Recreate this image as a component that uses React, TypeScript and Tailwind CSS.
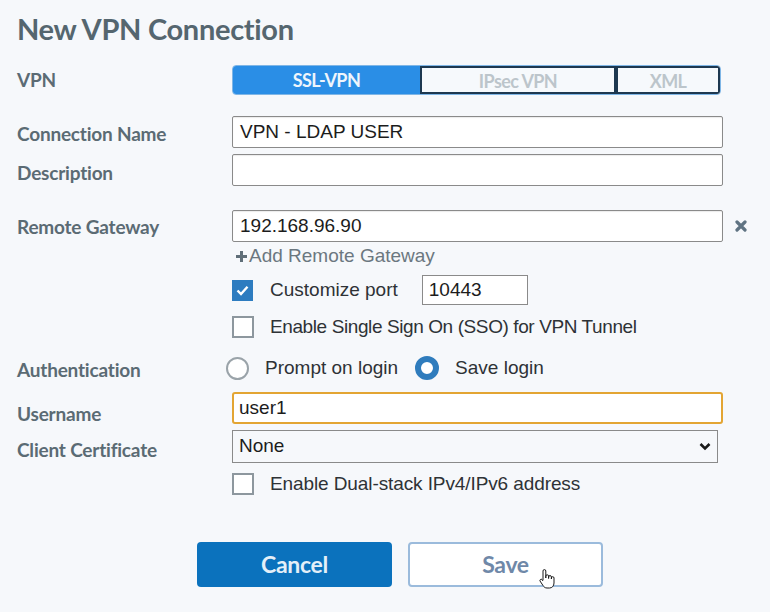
import { useState } from "react";

const label = "text-[19px] font-bold tracking-[-0.2px] text-[#5b6b74] [font-family:Lato,'Noto_Sans',sans-serif]";
const field = "text-[19px] text-[#1c1c1c] [font-family:'Liberation_Sans',Arial,sans-serif]";

function Checkbox({ checked }: { checked?: boolean }) {
  return checked ? (
    <span className="flex h-[21px] w-[21px] items-center justify-center bg-[#2d7cc0]">
      <svg width="13" height="11" viewBox="0 0 13 11">
        <path d="M1.5 5.5 L5 9 L11.5 1.8" fill="none" stroke="#fff" strokeWidth="2.4" />
      </svg>
    </span>
  ) : (
    <span className="block h-[22px] w-[22px] border-2 border-[#8d979e] bg-white" />
  );
}

function Radio({ checked }: { checked?: boolean }) {
  return checked ? (
    <span className="block h-[24px] w-[24px] rounded-full border-[6px] border-[#2f7cbd] bg-white" />
  ) : (
    <span className="block h-[23px] w-[23px] rounded-full border-2 border-[#9aa3a9] bg-white" />
  );
}

export default function App() {
  const [mode, setMode] = useState("SSL-VPN");

  return (
    <div className="h-[612px] w-[770px] overflow-hidden bg-[#f6f8fb] pl-[17px] pt-[12px]">
      <h1 className="text-[29px] font-bold leading-[34px] tracking-[-0.3px] text-[#55666f] [font-family:Lato,sans-serif]">
        New VPN Connection
      </h1>

      {/* VPN type */}
      <div className="mt-[19px] flex h-[30px] items-center">
        <div className={`${label} w-[215px]`}>VPN</div>
        <div className="flex h-[30px] w-[489px] overflow-hidden rounded-[4px] border border-[#7fb6e6] text-[18px] font-bold tracking-[-0.6px] [font-family:Lato,sans-serif]">
          {["SSL-VPN", "IPsec VPN", "XML"].map((m, i) => (
            <button
              key={m}
              onClick={() => setMode(m)}
              className={
                (i === 0 ? "w-[187px] " : i === 1 ? "w-[196px] " : "flex-1 ") +
                (mode === m
                  ? "bg-[#2a8ee6] text-[#eef5fc]"
                  : "border-2 border-[#1d3850] bg-[#f6f9fc] text-[#bcc5cb]")
              }
            >
              {m}
            </button>
          ))}
        </div>
      </div>

      {/* Connection name */}
      <div className="mt-[21px] flex h-[32px] items-center">
        <div className={`${label} w-[215px] pt-[4px]`}>Connection Name</div>
        <div className={`${field} flex h-[32px] w-[491px] items-center rounded-[2px] border border-[#8a8a8a] bg-white pl-[7px] shadow-[inset_0_1px_1px_rgba(0,0,0,0.08)]`}>
          VPN - LDAP USER
        </div>
      </div>

      {/* Description */}
      <div className="mt-[6px] flex h-[32px] items-center">
        <div className={`${label} w-[215px] pt-[7px]`}>Description</div>
        <div className="h-[32px] w-[491px] rounded-[2px] border border-[#8a8a8a] bg-white shadow-[inset_0_1px_1px_rgba(0,0,0,0.08)]" />
      </div>

      {/* Remote gateway */}
      <div className="mt-[24px] flex h-[32px] items-center">
        <div className={`${label} w-[215px] pt-[2px]`}>Remote Gateway</div>
        <div className={`${field} flex h-[32px] w-[491px] items-center rounded-[2px] border border-[#8a8a8a] bg-white pl-[7px] shadow-[inset_0_1px_1px_rgba(0,0,0,0.08)]`}>
          192.168.96.90
        </div>
        <svg className="ml-[12px]" width="12" height="12" viewBox="0 0 12 12">
          <path d="M2 2 L10 10 M10 2 L2 10" stroke="#5f7382" strokeWidth="3.2" strokeLinecap="round" />
        </svg>
      </div>

      <div className="ml-[215px] mt-[3px] flex h-[22px] items-center text-[19px] text-[#6b7780] [font-family:'Liberation_Sans',Arial,sans-serif]">
        <svg width="13" height="13" viewBox="0 0 13 13" className="ml-[3px]">
          <path d="M6.5 1 V12 M1 6.5 H12" stroke="#5f6e78" strokeWidth="3" />
        </svg>
        <span className="ml-[1px]">Add Remote Gateway</span>
      </div>

      {/* Customize port */}
      <div className="ml-[215px] mt-[8px] flex h-[30px] items-center">
        <Checkbox checked />
        <span className={`${field} ml-[17px] text-[18px] text-[#2e3236]`}>Customize port</span>
        <div className={`${field} ml-[24px] flex h-[30px] w-[106px] items-center border border-[#8a8a8a] bg-white pl-[6px]`}>
          10443
        </div>
      </div>

      {/* SSO */}
      <div className="ml-[215px] mt-[8px] flex h-[28px] items-center">
        <Checkbox />
        <span className={`${field} ml-[16px] text-[18px] tracking-[-0.4px] text-[#2e3236]`}>Enable Single Sign On (SSO) for VPN Tunnel</span>
      </div>

      {/* Authentication */}
      <div className="mt-[13px] flex h-[28px] items-center">
        <div className={`${label} w-[209px] pt-[5px]`}>Authentication</div>
        <Radio />
        <span className={`${field} ml-[16px] text-[18px] text-[#2e3236]`}>Prompt on login</span>
        <span className="ml-[17px]">
          <Radio checked />
        </span>
        <span className={`${field} ml-[16px] text-[18px] text-[#2e3236]`}>Save login</span>
      </div>

      {/* Username */}
      <div className="mt-[10px] flex h-[32px] items-center">
        <div className={`${label} w-[215px] pt-[12px]`}>Username</div>
        <div className={`${field} flex h-[32px] w-[491px] items-center rounded-[3px] border-2 border-[#e3a533] bg-white pl-[5px]`}>
          user1
        </div>
      </div>

      {/* Client certificate */}
      <div className="mt-[6px] flex h-[33px] items-center">
        <div className={`${label} w-[215px] pt-[8px]`}>Client Certificate</div>
        <div className={`${field} flex h-[33px] w-[486px] items-center justify-between border border-[#8a8a8a] bg-[#f6f8fb] pl-[6px] pr-[6px]`}>
          <span>None</span>
          <svg width="12" height="9" viewBox="0 0 12 9">
            <path d="M1.5 2 L6 6.5 L10.5 2" fill="none" stroke="#1a1a1a" strokeWidth="2.6" />
          </svg>
        </div>
      </div>

      {/* Dual stack */}
      <div className="ml-[215px] mt-[10px] flex h-[22px] items-center">
        <Checkbox />
        <span className={`${field} ml-[16px] text-[18px] tracking-[-0.1px] text-[#2e3236]`}>Enable Dual-stack IPv4/IPv6 address</span>
      </div>

      {/* Buttons */}
      <div className="ml-[180px] mt-[47px] flex gap-[16px] text-[23px] font-bold tracking-[-0.3px] [font-family:Lato,sans-serif]">
        <button className="h-[45px] w-[195px] rounded-[4px] bg-[#0b72bd] text-[#e4eff8]">Cancel</button>
        <button className="relative h-[45px] w-[195px] rounded-[4px] border-2 border-[#9bbbdc] bg-white text-[#6f88a8]">
          Save
          <svg className="absolute left-[128px] top-[24px]" width="18" height="22" viewBox="0 0 18 22">
            <path
              d="M5 12 V3 a1.4 1.4 0 0 1 2.8 0 V10 V8.2 a1.4 1.4 0 0 1 2.8 0 V10.5 V9 a1.4 1.4 0 0 1 2.8 0 V11 V10 a1.3 1.3 0 0 1 2.6 0 V15 c0 3 -2 5 -4.5 5 H9 c-2 0 -3 -1 -4 -2.5 L2 13 a1.3 1.3 0 0 1 2 -1.5 L5 13"
              fill="#fff"
              stroke="#1a1a1a"
              strokeWidth="1"
            />
          </svg>
        </button>
      </div>
    </div>
  );
}
